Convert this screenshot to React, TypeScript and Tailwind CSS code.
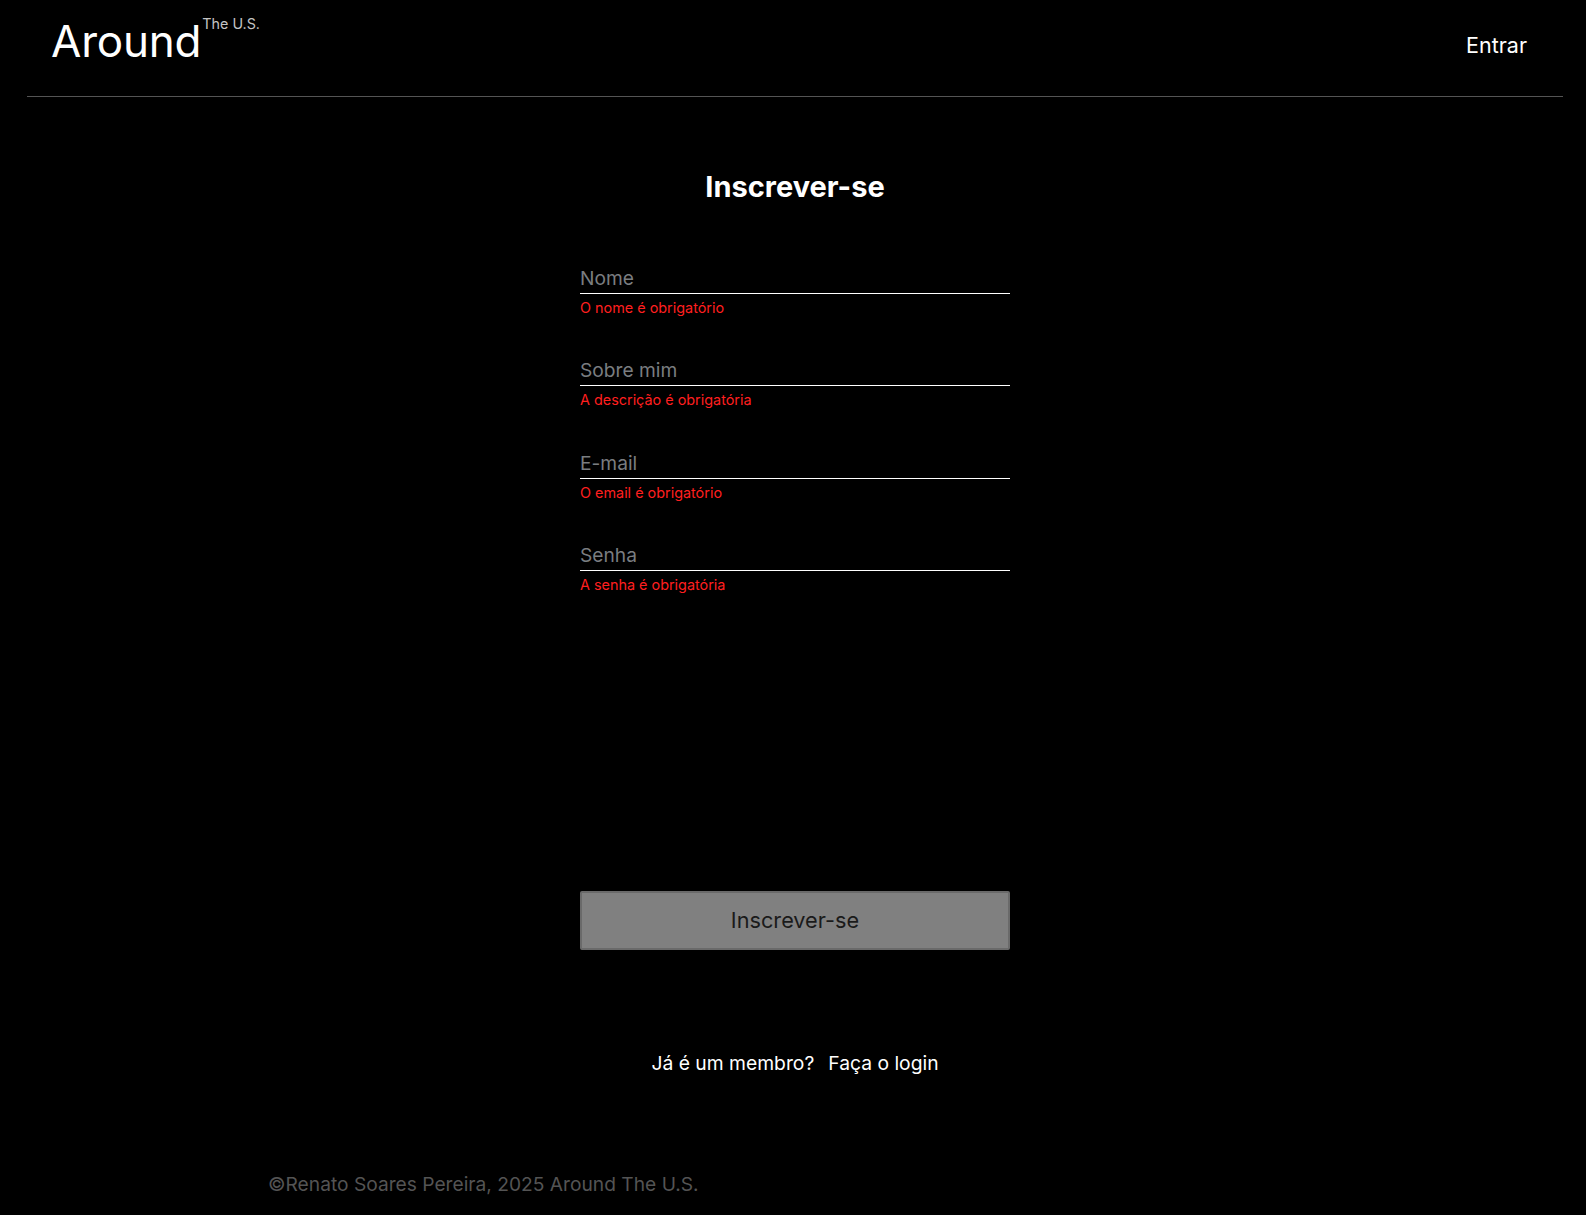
import React from 'react';

const fields = [
  { name: 'name', placeholder: 'Nome', type: 'text', error: 'O nome é obrigatório' },
  { name: 'about', placeholder: 'Sobre mim', type: 'text', error: 'A descrição é obrigatória' },
  { name: 'email', placeholder: 'E-mail', type: 'email', error: 'O email é obrigatório' },
  { name: 'password', placeholder: 'Senha', type: 'password', error: 'A senha é obrigatória' },
];

const Header: React.FC = () => (
  <header className="mx-auto w-[1536px] h-[97px] border-b border-[#545454] flex justify-between items-start pl-[24px] pr-[36px]">
    <div className="flex items-start mt-[19px]">
      <span className="text-[44px] leading-none tracking-[-0.2px]">Around</span>
      <span className="text-[14.3px] leading-none text-[#c4c4c4] ml-[1px] -mt-[2px]">The U.S.</span>
    </div>
    <a href="#" className="text-[21.5px] leading-none mt-[35px]">Entrar</a>
  </header>
);

export default function App() {
  return (
    <div className="min-h-screen bg-black text-white font-['Inter','Liberation_Sans',sans-serif] pl-[4px]">
      <Header />

      <main className="flex flex-col items-center">
        <h1 className="mt-[75px] text-[29px] leading-none font-bold">Inscrever-se</h1>

        <form className="w-[430px] mt-[68px] flex flex-col" noValidate>
          <div className="flex flex-col gap-[46px]">
            {fields.map((f) => (
              <div key={f.name} className="flex flex-col">
                <input
                  type={f.type}
                  name={f.name}
                  placeholder={f.placeholder}
                  className="w-full bg-transparent border-b border-white pb-[6px] text-[19.2px] leading-none h-[25px] outline-none placeholder:text-[#7a7d80]"
                />
                <span className="mt-[7px] text-[14.4px] leading-none text-[#ff1f1f]">{f.error}</span>
              </div>
            ))}
          </div>

          <button
            type="submit"
            className="mt-[298px] h-[59px] w-full bg-[#808080] border-2 border-[#6a6a6a] rounded-[2px] text-[21.7px] text-[#1a1a1a]"
          >
            Inscrever-se
          </button>
        </form>

        <p className="mt-[104px] text-[19.3px] leading-none flex gap-[14px]">
          <span>Já é um membro?</span>
          <a href="#">Faça o login</a>
        </p>
      </main>

      <footer className="mt-[102px] pl-[264px] pb-[20px]">
        <p className="text-[19.2px] leading-none text-[#545454]">©Renato Soares Pereira, 2025 Around The U.S.</p>
      </footer>
    </div>
  );
}
